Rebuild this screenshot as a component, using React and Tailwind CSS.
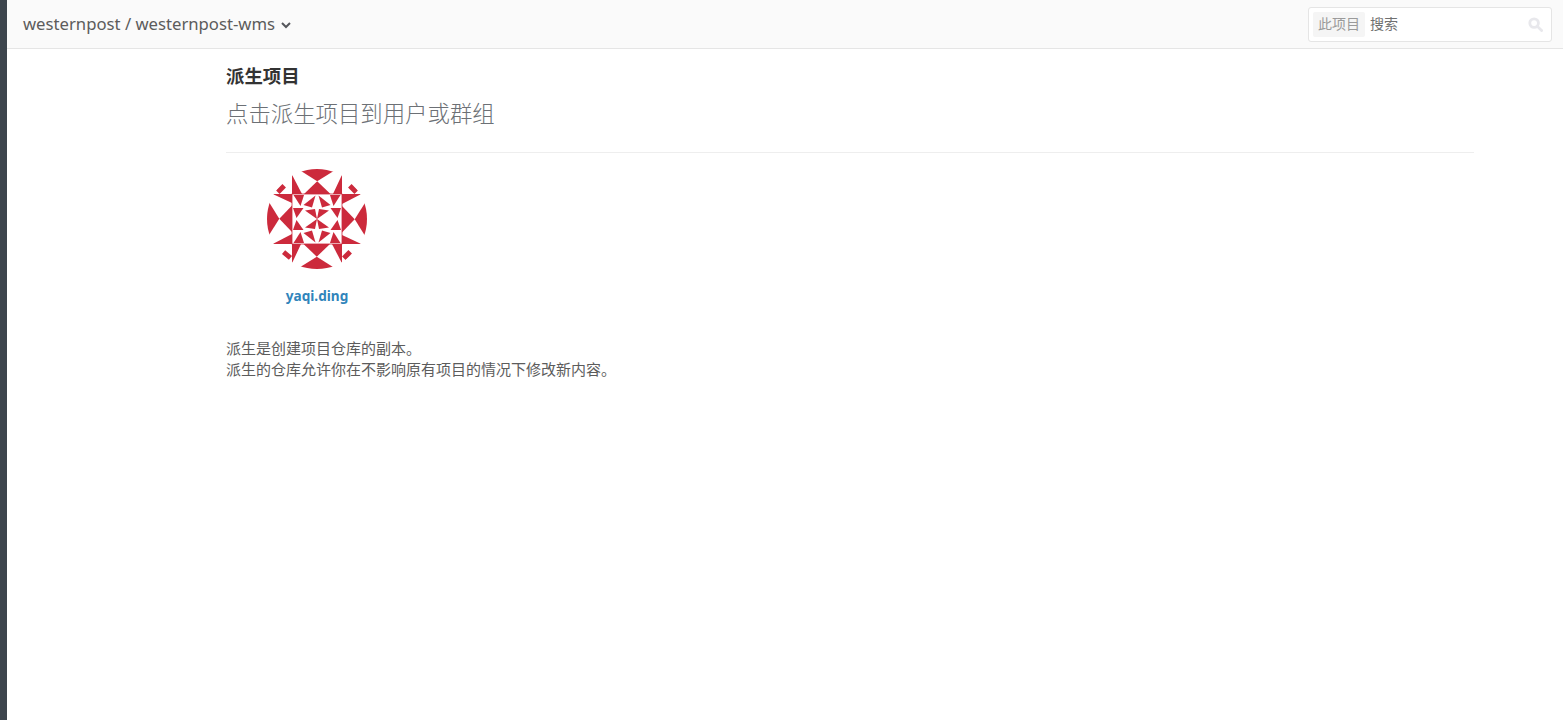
const FONT = "font-['Noto_Sans','Noto_Sans_CJK_SC',sans-serif]";

// 外圈一条边，旋转四次
const Band = ({ rotate }) => (
  <g transform={`rotate(${rotate} 50 50)`} fill="#cc2a3c">
    <polygon points="5.7,25 25,25 25,34" />
    <polygon points="12.3,49.8 25,36.5 25,63" />
    <polygon points="-5,22 12.3,49.8 -5,77" />
    <polygon points="5.7,75 25,75 25,65" />
  </g>
);

// 中心 50x50 的一格，镜像四次
const Cell = ({ flip }) => (
  <g transform={flip} fill="#cc2a3c">
    <polygon points="26.5,26 37,26 33.5,37" />
    <polygon points="48.5,26.5 36.5,36 45,38.5" />
    <polygon points="26,39 36.5,39 29.5,49" />
    <polygon points="38,41.5 48,40 50,50" />
  </g>
);

const FLIPS = [
  'matrix(1 0 0 1 0 0)',
  'matrix(-1 0 0 1 100 0)',
  'matrix(1 0 0 -1 0 100)',
  'matrix(-1 0 0 -1 100 100)',
];

const Avatar = () => (
  <svg viewBox="0 0 100 100" className="w-[100px] h-[100px]">
    <defs>
      <clipPath id="avatar-circle">
        <circle cx="50" cy="50" r="50" />
      </clipPath>
    </defs>
    <g clipPath="url(#avatar-circle)">
      {[0, 90, 180, 270].map(r => <Band key={r} rotate={r} />)}
      <rect x="25" y="25" width="50" height="50" fill="none" stroke="#cc2a3c" strokeWidth="0.8" />
      {FLIPS.map(f => <Cell key={f} flip={f} />)}
      <g fill="#cc2a3c">
        <rect x="9.5" y="17.5" width="9" height="5" transform="rotate(-45 14 20)" />
        <rect x="81.5" y="17.5" width="9" height="5" transform="rotate(45 86 20)" />
        <rect x="15.5" y="83.5" width="9" height="5" transform="rotate(40 20 86)" />
        <rect x="75.5" y="83.5" width="9" height="5" transform="rotate(-45 80 86)" />
      </g>
    </g>
  </svg>
);

const App = () => {
  return (
    <div className={`${FONT} min-h-[720px] bg-white border-l-[7px] border-[#3d454d] text-[#555]`}>
      {/* 顶部栏 */}
      <header className="h-[49px] bg-[#fafafa] border-b border-[#e5e5e5] flex items-center justify-between pl-4 pr-[11px]">
        <div className="flex items-center gap-[6px] text-[#5c5c5c] text-[16.7px]">
          <span>westernpost / westernpost-wms</span>
          <svg viewBox="0 0 10 10" className="w-[10px] h-[10px] mt-[3px]" fill="none" stroke="#54565b" strokeWidth="2">
            <path d="M1 3l4 4 4-4" />
          </svg>
        </div>
        <div className="w-[244px] h-[35px] bg-white border border-[#e5e5e5] rounded-[3px] flex items-center pl-1 pr-[8px]">
          <span className="h-[25px] px-[5px] bg-[#f5f5f5] rounded-[2px] text-[14px] leading-[23px] text-[#9a9a9a]">此项目</span>
          <span className="ml-[5px] text-[14px] leading-[23px] mb-[2px] text-[#707070]">搜索</span>
          <svg viewBox="0 0 16 16" className="w-[15px] h-[15px] ml-auto" fill="none" stroke="#e8e8ec" strokeWidth="3">
            <circle cx="6.5" cy="6.5" r="4.6" />
            <path d="M10 10l4.5 4.5" strokeLinecap="round" />
          </svg>
        </div>
      </header>

      {/* 内容 */}
      <main className="w-[1248px] ml-[219px]">
        <h3 className="mt-[15px] text-[18.4px] leading-[24px] font-bold text-[#333]">派生项目</h3>
        <p className="mt-[11px] pb-[23px] text-[22.4px] leading-[30px] font-light text-[#6c7075] border-b border-[#eee]">点击派生项目到用户或群组</p>
        <div className="w-[182px] mt-[16px] flex flex-col items-center">
          <Avatar />
          <div className="mt-[18px] text-[13.6px] leading-[18px] font-bold text-[#3084bb]">yaqi.ding</div>
        </div>
        <p className="mt-[33px] text-[15px] leading-[21px] text-[#5c5c5c]">
          派生是创建项目仓库的副本。<br />
          派生的仓库允许你在不影响原有项目的情况下修改新内容。
        </p>
      </main>
    </div>
  );
};

export default App;
